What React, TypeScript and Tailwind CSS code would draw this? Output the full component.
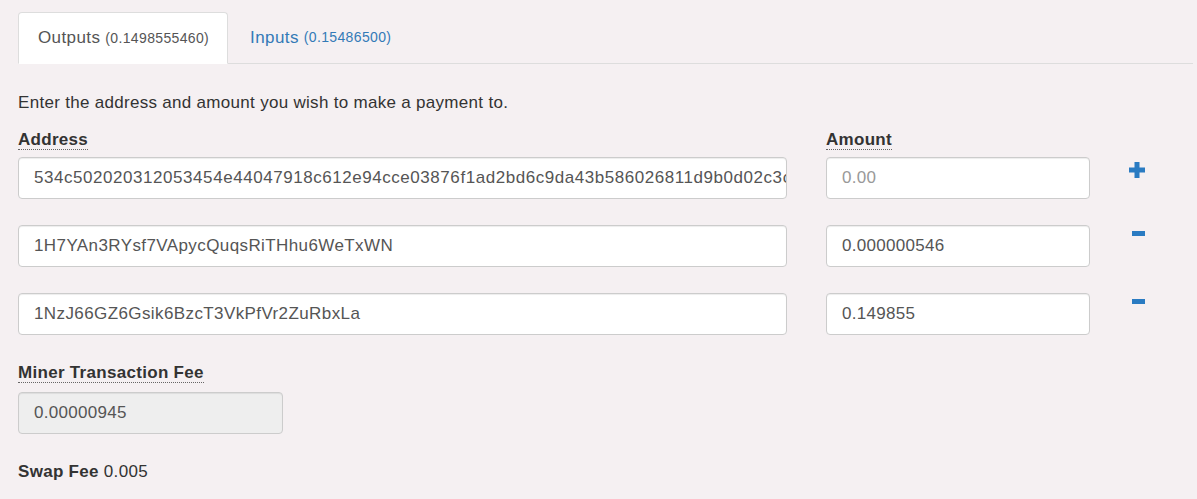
import React from "react";

const font = { fontFamily: '"Liberation Sans", Arial, sans-serif' };

function Label({ children }: { children: React.ReactNode }) {
  return (
    <div className="h-[20px] flex items-end">
      <span className="font-bold text-[17px] tracking-[0.3px] leading-[18px] text-[#333] border-b border-dotted border-[#666]">
        {children}
      </span>
    </div>
  );
}

function Input({ value, placeholder, disabled, w, track }: { value?: string; placeholder?: string; disabled?: boolean; w: string; track?: string }) {
  return (
    <div
      className={`${w} h-[42px] rounded-[4px] border border-[#ccc] flex items-center pl-[15px] overflow-hidden whitespace-nowrap text-[17px] ${track ?? "tracking-[0.3px]"} ${
        disabled ? "bg-[#eeeeee] text-[#555]" : "bg-white text-[#555]"
      }`}
      style={{ boxShadow: "inset 0 1px 1px rgba(0,0,0,0.075)" }}
    >
      {value ? <span className="text-[#555]">{value}</span> : <span className="text-[#999]">{placeholder}</span>}
    </div>
  );
}

function Plus() {
  return (
    <svg width="16" height="16" viewBox="0 0 16 16">
      <rect x="0" y="5.5" width="16" height="5" fill="#2a7bc2" />
      <rect x="5.5" y="0" width="5" height="16" fill="#2a7bc2" />
    </svg>
  );
}

function Minus() {
  return (
    <svg width="13" height="5" viewBox="0 0 13 5">
      <rect x="0" y="0" width="13" height="5" fill="#2a7bc2" />
    </svg>
  );
}

export default function App() {
  const rows = [
    { addr: "534c502020312053454e44047918c612e94cce03876f1ad2bd6c9da43b586026811d9b0d02c3c4", amt: "", icon: "plus" },
    { addr: "1H7YAn3RYsf7VApycQuqsRiTHhu6WeTxWN", amt: "0.000000546", icon: "minus" },
    { addr: "1NzJ66GZ6Gsik6BzcT3VkPfVr2ZuRbxLa", amt: "0.149855", icon: "minus" },
  ];
  return (
    <div className="w-[1197px] h-[499px] bg-[#f5f0f2] pl-[18px] pr-[4px] pt-[12px] text-[#333] overflow-hidden" style={font}>
      <div className="flex border-b border-[#ddd] h-[52px]">
        <div className="h-[52px] -mb-px bg-white border border-[#ddd] border-b-white rounded-t-[4px] pl-[19px] pr-[18px] flex items-center text-[#555]">
          <span className="text-[17px] tracking-[0.4px]">Outputs</span>
          <span className="text-[14px] tracking-[0.35px] ml-[5px]">(0.1498555460)</span>
        </div>
        <div className="h-[51px] pl-[22px] flex items-center text-[#337ab7]">
          <span className="text-[17px] tracking-[0.4px]">Inputs</span>
          <span className="text-[14px] tracking-[0.35px] ml-[5px]">(0.15486500)</span>
        </div>
      </div>

      <div className="mt-[29px] text-[17px] tracking-[0.3px] leading-[20px] text-[#333]">
        Enter the address and amount you wish to make a payment to.
      </div>

      <div className="mt-[17px] flex">
        <div className="w-[808px]"><Label>Address</Label></div>
        <div><Label>Amount</Label></div>
      </div>

      <div className="mt-[7px] flex flex-col gap-[26px]">
        {rows.map((r, i) => (
          <div key={i} className="flex items-center">
            <Input w="w-[769px]" value={r.addr} track={i === 0 ? "tracking-[0.55px]" : "tracking-[0.4px]"} />
            <div className="w-[39px]" />
            <Input w="w-[264px]" value={r.amt} placeholder="0.00" />
            <div className="w-[16px] flex justify-center ml-[39px]">
              {r.icon === "plus" ? (
                <div className="-mt-[16px]"><Plus /></div>
              ) : (
                <div className="-mt-[15px] ml-[3px]"><Minus /></div>
              )}
            </div>
          </div>
        ))}
      </div>

      <div className="mt-[28px]"><Label>Miner Transaction Fee</Label></div>
      <div className="mt-[9px]">
        <Input w="w-[265px]" value="0.00000945" disabled />
      </div>

      <div className="mt-[28px] text-[17px] tracking-[0.3px] leading-[20px]">
        <span className="font-bold">Swap Fee</span> 0.005
      </div>
    </div>
  );
}
